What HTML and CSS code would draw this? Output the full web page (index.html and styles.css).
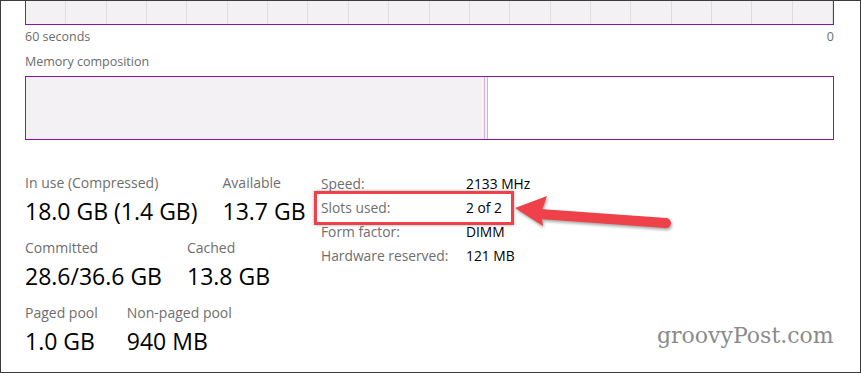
FILE: index.html
```html
<!DOCTYPE html>
<html lang="en">
<head>
    <meta charset="UTF-8">
    <meta name="viewport" content="width=device-width, initial-scale=1.0">
    <title>Task Manager - Memory</title>
    <link rel="stylesheet" href="styles.css">
</head>
<body>
    <div class="frame">
        <div class="graph"></div>
        <div class="axis">
            <span>60 seconds</span>
            <span>0</span>
        </div>
        <div class="caption">Memory composition</div>
        <div class="composition">
            <div class="seg seg-inuse"></div>
            <div class="seg seg-modified"></div>
        </div>

        <div class="stats">
            <div class="stats-main">
                <div class="stat-row">
                    <div class="stat">
                        <div class="stat-label">In use (Compressed)</div>
                        <div class="stat-value">18.0 GB (1.4 GB)</div>
                    </div>
                    <div class="stat">
                        <div class="stat-label">Available</div>
                        <div class="stat-value">13.7 GB</div>
                    </div>
                </div>
                <div class="stat-row">
                    <div class="stat">
                        <div class="stat-label">Committed</div>
                        <div class="stat-value">28.6/36.6 GB</div>
                    </div>
                    <div class="stat">
                        <div class="stat-label">Cached</div>
                        <div class="stat-value">13.8 GB</div>
                    </div>
                </div>
                <div class="stat-row row-pool">
                    <div class="stat">
                        <div class="stat-label">Paged pool</div>
                        <div class="stat-value">1.0 GB</div>
                    </div>
                    <div class="stat">
                        <div class="stat-label">Non-paged pool</div>
                        <div class="stat-value">940 MB</div>
                    </div>
                </div>
            </div>
            <div class="specs">
                <span class="spec-label">Speed:</span><span>2133 MHz</span>
                <span class="spec-label">Slots used:</span><span>2 of 2</span>
                <span class="spec-label">Form factor:</span><span>DIMM</span>
                <span class="spec-label">Hardware reserved:</span><span>121 MB</span>
            </div>
        </div>

        <!-- annotation -->
        <div class="callout"></div>
        <svg class="arrow" width="175" height="50" viewBox="505 185 175 50">
            <line x1="540" y1="214" x2="666" y2="223" stroke="#ee4149" stroke-width="10" stroke-linecap="round"/>
            <polygon points="515,208 547,196 541,213 543,226" fill="#ee4149"/>
        </svg>

        <div class="watermark">groovyPost.com</div>
    </div>
</body>
</html>
```

FILE: styles.css
```css
body {
    margin: 0;
    padding: 0;
    background-color: #fff;
}

.frame {
    position: relative;
    width: 861px;
    height: 373px;
    box-sizing: border-box;
    border: 1px solid #3c3c3c;
    padding: 0 26px 0 24px;
    font-family: "Open Sans", "Noto Sans", sans-serif;
    color: #000;
    overflow: hidden;
    background-color: #fff;
}

.graph {
    height: 23px;
    border: 1px solid #8b12ae;
    border-top: none;
    background-color: #f3f1f4;
    background-image: repeating-linear-gradient(to right, transparent 0 39.35px, #dfdcdf 39.35px 40.35px);
}

.axis {
    display: flex;
    justify-content: space-between;
    margin-top: 3px;
    font-size: 12.5px;
    line-height: 17px;
    color: #6b6b6b;
}

.caption {
    margin-top: 8px;
    font-size: 12.5px;
    line-height: 17px;
    color: #6b6b6b;
}

.composition {
    display: flex;
    height: 62px;
    margin-top: 6px;
    border: 1px solid #8b12ae;
}

.seg {
    background-color: #f3f1f4;
    border-right: 1px solid #cdb2d8;
}

.seg-inuse {
    width: 458px;
}

.seg-modified {
    width: 2px;
}

.stats {
    display: flex;
    align-items: flex-start;
    margin-top: 30px;
}

.stats-main {
    width: 296px;
    padding-top: 4px;
}

.stat-row {
    display: flex;
    gap: 25px;
    margin-bottom: 13px;
}

.row-pool {
    gap: 29px;
}

.stat-label {
    font-size: 14px;
    line-height: 17px;
    color: #6e6e6e;
}

.stat-value {
    margin-top: 5px;
    font-size: 23px;
    line-height: 30px;
    color: #000;
}

.specs {
    display: grid;
    grid-template-columns: 145px auto;
    margin-top: 2px;
    font-size: 13.8px;
    line-height: 24px;
    color: #000;
}

.spec-label {
    color: #6e6e6e;
}

.callout {
    position: absolute;
    left: 313px;
    top: 190px;
    width: 200px;
    height: 34px;
    box-sizing: border-box;
    border: 3px solid #ee4149;
    box-shadow: 0 0 3px rgba(0, 0, 0, 0.35);
}

.arrow {
    position: absolute;
    left: 504px;
    top: 184px;
    filter: drop-shadow(1px 2px 1.5px rgba(0, 0, 0, 0.35));
}

.watermark {
    position: absolute;
    left: 656px;
    top: 324px;
    font-family: "DejaVu Serif", serif;
    font-size: 22px;
    line-height: 22px;
    color: #8a8a8a;
}
```
